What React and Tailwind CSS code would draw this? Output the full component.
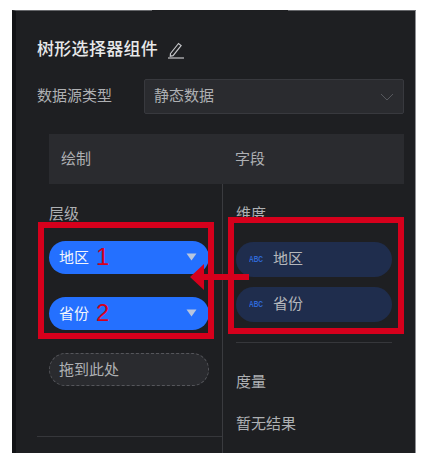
const cjk = 'font-["Liberation_Sans","Noto_Sans_CJK_SC",sans-serif]';

const Caret = () => (
  <svg width="11" height="8" viewBox="0 0 11 8" className="absolute right-[12px] top-[12px]">
    <path d="M0.5 0.5h10L5.5 7.5z" fill="#b9c6de" />
  </svg>
);

const LevelPill = ({ label, className }) => (
  <div className={`relative h-[33px] w-[160px] rounded-full bg-[#2470ff] pl-[10px] text-[15px] leading-[33px] text-[#f2f5fb] ${className}`}>
    {label}
    <Caret />
  </div>
);

const FieldPill = ({ label, className }) => (
  <div className={`flex h-[35px] w-[156px] items-center rounded-full bg-[#1f2d4d] pl-[13px] text-[15px] text-[#b5b7bb] ${className}`}>
    <span className="w-[24px] origin-left scale-x-[0.72] text-[9px] font-bold text-[#2f69d8]">ABC</span>
    {label}
  </div>
);

export default function App() {
  return (
    <div className={`relative h-[464px] w-[424px] overflow-hidden bg-white pl-[12px] pt-[10px] ${cjk}`}>
      <div className="h-[443px] w-[404px] border-r border-t border-r-[#8f9094] border-t-[#66676b] border-l-[4px] border-l-[#121316] bg-[#1e1f22] box-border">
        <div className="flex h-[68px] items-start pl-[21px] pt-[29px]">
          <span className="text-[17px] leading-[20px] font-medium tracking-[0.3px] text-[#e8e9ea]">树形选择器组件</span>
          <svg width="18" height="18" viewBox="0 0 18 18" fill="none" stroke="#c4c5c8" strokeWidth="1.2" className="ml-[9px] mt-[1px]">
            <path d="M3.5 12.5 11.5 2.5l2.6 2.1-8 10-2.8.6z" />
            <path d="M1 17h16" />
          </svg>
        </div>

        <div className="flex h-[35px] items-center pl-[21px]">
          <span className="w-[107px] text-[15px] text-[#aeb0b3]">数据源类型</span>
          <div className="flex h-[35px] w-[260px] items-center justify-between rounded-[2px] border border-[#38393e] bg-[#2a2b2f] pl-[9px] pr-[9px] text-[15px] text-[#aeb0b3]">
            静态数据
            <svg width="14" height="8" viewBox="0 0 14 8" fill="none" stroke="#56585d" strokeWidth="1">
              <path d="M1 1l6 6 6-6" />
            </svg>
          </div>
        </div>

        <div className="ml-[33px] mt-[20px] flex h-[50px] w-[355px] items-center bg-[#2a2b2f] text-[15px] text-[#aeb0b3]">
          <span className="w-[174px] pl-[12px]">绘制</span>
          <span className="pl-[12px]">字段</span>
        </div>

        <div className="flex h-[269px]">
          <div className="flex w-[206px] flex-col">
            <div className="flex-1 pl-[33px] pt-[20px] text-[15px] text-[#aeb0b3]">
              <div className="h-[20px] leading-[20px]">层级</div>
              <LevelPill label="地区" className="mt-[17px]" />
              <LevelPill label="省份" className="mt-[23px]" />
              <div className="mt-[23px] h-[33px] w-[160px] rounded-full border border-dashed border-[#55565b] bg-[#2a2b2f] pl-[9px] leading-[31px]">
                拖到此处
              </div>
            </div>
            <div className="mb-[16px] ml-[21px] h-px bg-[#36373b]" />
          </div>
          <div className="w-px bg-[#3a3b3f]" />
          <div className="pl-[13px] pt-[20px] text-[15px] text-[#aeb0b3]">
            <div className="h-[20px] leading-[20px]">维度</div>
            <FieldPill label="地区" className="mt-[18px]" />
            <FieldPill label="省份" className="mt-[10px]" />
            <div className="mt-[20px] h-px w-[156px] bg-[#36373b]" />
            <div className="mt-[29px] h-[20px] leading-[20px]">度量</div>
            <div className="mt-[22px] h-[20px] leading-[20px]">暂无结果</div>
          </div>
        </div>
      </div>

      {/* dark notch in the panel's top edge */}
      <div className="absolute left-[152px] top-[10px] h-px w-[136px] bg-[#1e1f22]" />

      {/* annotations drawn over the panel */}
      <div className="absolute left-[38px] top-[222px] h-[117px] w-[176px] border-[6px] border-[#d6001c]" />
      <div className="absolute left-[228px] top-[217px] h-[117px] w-[176px] border-[6px] border-[#d6001c]" />
      <span className="absolute left-[96px] top-[243px] text-[24px] leading-[28px] text-[#d6001c]">1</span>
      <span className="absolute left-[96px] top-[299px] text-[24px] leading-[28px] text-[#d6001c]">2</span>
      <svg width="60" height="28" viewBox="0 0 60 28" className="absolute left-[190px] top-[263px]">
        <path d="M0 14 14 1v10h45v6H14v10z" fill="#d6001c" />
      </svg>
    </div>
  );
}
